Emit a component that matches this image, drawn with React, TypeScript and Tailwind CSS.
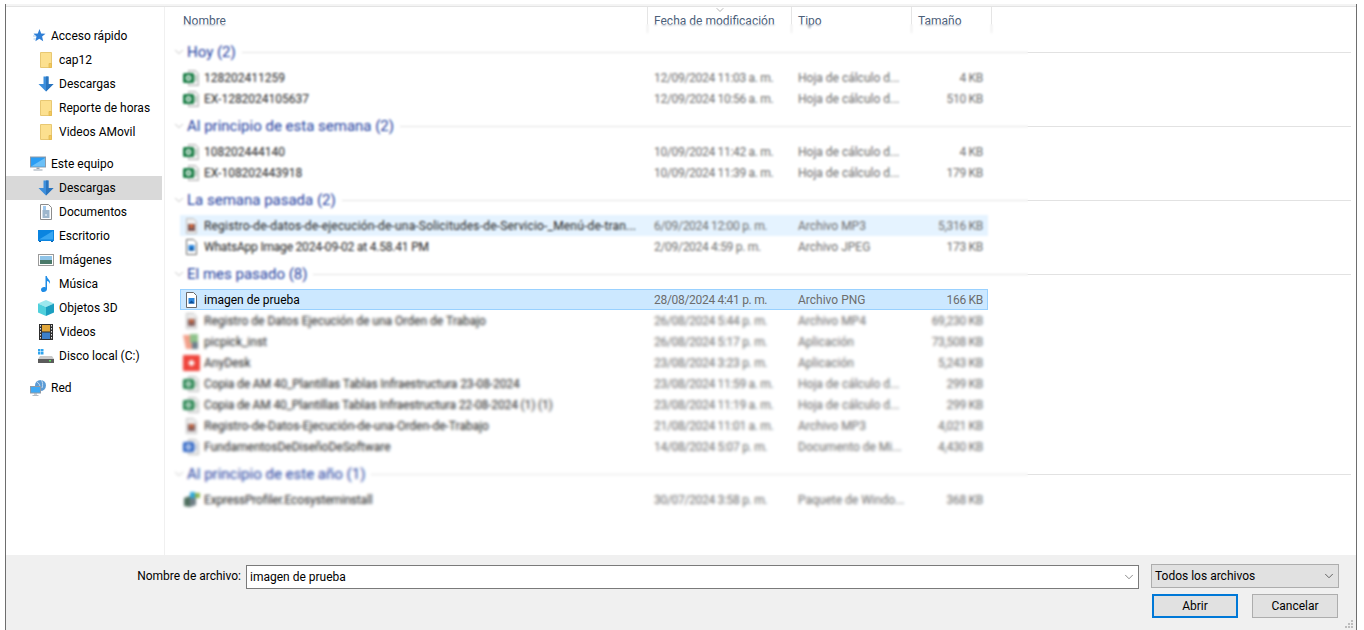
import type { ReactNode } from "react";
import { ChevronDown } from "lucide-react";

const Folder = () => (
  <svg width="16" height="16" viewBox="0 0 16 16">
    <path d="M2.500.5h11v15h-11z" fill="#fce08f" stroke="#e8c873" />
    <path d="M11 11.500h2.500v4H11z" fill="#f3c95f" stroke="#e2b94f" strokeWidth="0.8" />
  </svg>
);

const DownArrow = () => (
  <svg width="16" height="16" viewBox="0 0 16 16">
    <path d="M5.500.5h5v7.500h5L8 15.500.5 8h5z" fill="#3d8fdc" />
    <path d="M8 .5h2.500v7.500h5L8 15.500z" fill="#2a74bd" />
  </svg>
);

const Star = () => (
  <svg width="16" height="16" viewBox="0 0 16 16">
    <path d="M9.500 1l1.700 4.400 4.300.3-3.400 2.900 1.100 4.700-3.900-2.500-3.900 2.500 1.100-4.700L3.500 5.700l4.300-.3z" fill="#2f7fd6" />
    <path d="M3 8h3M3.500 11H6M4 5.500h3" stroke="#a9cdf0" strokeWidth="1" />
  </svg>
);

const Monitor = () => (
  <svg width="16" height="16" viewBox="0 0 16 16">
    <rect x="0.500" y="1" width="15" height="10" fill="#2a9df4" stroke="#8f9aa6" />
    <path d="M1 10.500L15 2v8.500z" fill="#6cc0f7" />
    <path d="M6.500 11.500h3v1.500h-3zM3.500 13.500h9v1h-9z" fill="#9aa5b1" />
  </svg>
);

const Doc = () => (
  <svg width="16" height="16" viewBox="0 0 16 16">
    <path d="M2.500.5h8l3 3v12h-11z" fill="#fff" stroke="#8c8c8c" />
    <path d="M4.500 7h7M4.500 9h7M4.500 11h3M8.500 11h3M4.500 13h7" stroke="#3d6f99" />
    <path d="M5 3h3M5 5h3" stroke="#3d8fdc" />
  </svg>
);

const Desktop = () => (
  <svg width="16" height="16" viewBox="0 0 16 16">
    <rect x="0" y="2" width="16" height="11" fill="#0a84e0" />
    <path d="M1 11.500L15 3v8.500z" fill="#38a6f2" />
    <path d="M1 13.500h2M13 13.500h2" stroke="#0a5fa8" />
  </svg>
);

const Pictures = () => (
  <svg width="16" height="16" viewBox="0 0 16 16">
    <rect x="0.500" y="2.500" width="15" height="11" fill="#fff" stroke="#9a9a9a" />
    <rect x="2" y="4" width="12" height="4" fill="#8fc4e8" />
    <rect x="2" y="8" width="12" height="4" fill="#4a7a6a" />
  </svg>
);

const Music = () => (
  <svg width="16" height="16" viewBox="0 0 16 16">
    <path d="M7.500 0h1.300c.3 3 4 3.500 3.200 8-.5-2-2-3-3-3v8c0 1.700-1.700 3-3.500 3S3 14.800 3 13.400 4.600 11 6 11c.6 0 1.100.1 1.500.4z" fill="#1e8ce6" />
  </svg>
);

const Cube = () => (
  <svg width="16" height="16" viewBox="0 0 16 16">
    <path d="M8 0l8 3.500-8 3.500L0 3.500z" fill="#9be8ee" />
    <path d="M0 3.500L8 7v9L0 12.500z" fill="#4fd0dc" />
    <path d="M16 3.500L8 7v9l8-3.500z" fill="#1b9fc0" />
  </svg>
);

const Film = () => (
  <svg width="16" height="16" viewBox="0 0 16 16">
    <rect x="1" y="0" width="14" height="16" fill="#2d2d2d" />
    <path d="M2.500 1v14M13.500 1v14" stroke="#e5e5e5" strokeDasharray="1.500 1.500" />
    <rect x="4" y="1" width="8" height="6.500" fill="#e0a63a" />
    <rect x="4" y="8.500" width="8" height="6.500" fill="#3d80c9" />
  </svg>
);

const Disk = () => (
  <svg width="16" height="16" viewBox="0 0 16 16">
    <path d="M0 1h2.500v2.500H0zM3 1h2.500v2.500H3zM0 4h2.500v2.500H0zM3 4h2.500v2.500H3z" fill="#2fa4ee" />
    <path d="M2 8h12l2 3H0z" fill="#c9c9c9" />
    <rect x="0" y="11" width="16" height="4" fill="#5b5b5b" />
    <rect x="11" y="12" width="2" height="1.500" fill="#5fe05f" />
  </svg>
);

const Network = () => (
  <svg width="16" height="16" viewBox="0 0 16 16">
    <circle cx="10.500" cy="5.500" r="5.500" fill="#5b9bd5" />
    <path d="M7 2c2 1 3 3 3 6M11 0c2 2 2 5 1 8" stroke="#c4dcf2" fill="none" />
    <rect x="0.500" y="6.500" width="10" height="6.500" fill="#3fa9f5" stroke="#8f9aa6" />
    <path d="M4 13.500h3v1H4zM2.500 15h6v.7h-6z" fill="#9aa5b1" />
  </svg>
);

const ExcelIcon = () => (
  <svg width="17" height="16" viewBox="0 0 17 16">
    <path d="M5.500.5h7l3 3v12h-10z" fill="#eeeeee" stroke="#b5b5b5" />
    <path d="M10 6h4M10 8h4M10 10h4" stroke="#7fae90" />
    <rect x="0" y="3" width="11" height="10" rx="1.500" fill="#1e8049" />
    <circle cx="5.500" cy="8" r="2" fill="none" stroke="#fff" strokeWidth="1.300" />
  </svg>
);

const MediaIcon = () => (
  <svg width="17" height="16" viewBox="0 0 17 16">
    <path d="M3.500.5h7l3 3v12h-10z" fill="#eeeeee" stroke="#bdbdbd" />
    <rect x="5" y="6" width="7" height="7" fill="#7c5a5a" />
    <circle cx="8.500" cy="8" r="2" fill="#d86a3a" />
  </svg>
);

const ImageIcon = () => (
  <svg width="17" height="16" viewBox="0 0 17 16">
    <path d="M3.500.5h7l3 3v12h-10z" fill="#fff" stroke="#6b6b6b" />
    <path d="M5.500 6h6v5.500h-6z" fill="#2d86dc" />
    <path d="M5.500 11.500l3-3 3 3z" fill="#0f4f96" />
  </svg>
);

const PickIcon = () => (
  <svg width="17" height="16" viewBox="0 0 17 16">
    <path d="M0 1h7l3 14H3z" fill="#f3a08a" />
    <path d="M7 0h8v9H7z" fill="#8fc28b" />
    <path d="M9 8h6v7H9z" fill="#6d7f8c" />
  </svg>
);

const AnyDeskIcon = () => (
  <svg width="17" height="16" viewBox="0 0 17 16">
    <rect x="0" y="0" width="17" height="16" rx="1" fill="#ef443b" />
    <path d="M8.500 4.500L12 8l-3.500 3.500L5 8z" fill="#fff" />
  </svg>
);

const WordIcon = () => (
  <svg width="17" height="16" viewBox="0 0 17 16">
    <path d="M5.500.5h7l3 3v12h-10z" fill="#eeeeee" stroke="#b5b5b5" />
    <path d="M10 6h4M10 8h4M10 10h4" stroke="#8fa9d8" />
    <rect x="0" y="3" width="11" height="10" rx="1.500" fill="#2b62c4" />
    <circle cx="5.500" cy="8" r="2" fill="none" stroke="#fff" strokeWidth="1.300" />
  </svg>
);

const PackageIcon = () => (
  <svg width="17" height="16" viewBox="0 0 17 16">
    <path d="M1 6l6-2v11l-6-1z" fill="#4f6f5f" />
    <path d="M7 4l6-2v11l-6 2z" fill="#6f7f86" />
    <path d="M7 0h5v6H7z" fill="#2fa8d8" />
    <path d="M12 1h5v5h-5z" fill="#8db24f" />
  </svg>
);

const quickAccess: [ReactNode, string][] = [
  [<Folder />, "cap12"],
  [<DownArrow />, "Descargas"],
  [<Folder />, "Reporte de horas"],
  [<Folder />, "Videos AMovil"],
];

const thisPc: [ReactNode, string, boolean?][] = [
  [<DownArrow />, "Descargas", true],
  [<Doc />, "Documentos"],
  [<Desktop />, "Escritorio"],
  [<Pictures />, "Imágenes"],
  [<Music />, "Música"],
  [<Cube />, "Objetos 3D"],
  [<Film />, "Videos"],
  [<Disk />, "Disco local (C:)"],
];

type FileRow = {
  icon: ReactNode;
  name: string;
  date: string;
  kind: string;
  size: string;
  state?: "hover" | "selected";
  nameClass?: string;
};

const hoja = "Hoja de cálculo d...";

const groups: { title: string; files: FileRow[] }[] = [
  {
    title: "Hoy (2)",
    files: [
      { icon: <ExcelIcon />, name: "128202411259", date: "12/09/2024 11:03 a. m.", kind: hoja, size: "4 KB" },
      { icon: <ExcelIcon />, name: "EX-1282024105637", date: "12/09/2024 10:56 a. m.", kind: hoja, size: "510 KB" },
    ],
  },
  {
    title: "Al principio de esta semana (2)",
    files: [
      { icon: <ExcelIcon />, name: "108202444140", date: "10/09/2024 11:42 a. m.", kind: hoja, size: "4 KB" },
      { icon: <ExcelIcon />, name: "EX-108202443918", date: "10/09/2024 11:39 a. m.", kind: hoja, size: "179 KB" },
    ],
  },
  {
    title: "La semana pasada (2)",
    files: [
      {
        icon: <MediaIcon />,
        name: "Registro-de-datos-de-ejecución-de-una-Solicitudes-de-Servicio-_Menú-de-tran...",
        date: "6/09/2024 12:00 p. m.",
        kind: "Archivo MP3",
        size: "5,316 KB",
        state: "hover",
        nameClass: "tracking-[0.18px]",
      },
      {
        icon: <ImageIcon />,
        name: "WhatsApp Image 2024-09-02 at 4.58.41 PM",
        date: "2/09/2024 4:59 p. m.",
        kind: "Archivo JPEG",
        size: "173 KB",
        nameClass: "tracking-[-0.2px]",
      },
    ],
  },
  {
    title: "El mes pasado (8)",
    files: [
      { icon: <ImageIcon />, name: "imagen de prueba", date: "28/08/2024 4:41 p. m.", kind: "Archivo PNG", size: "166 KB", state: "selected" },
      { icon: <MediaIcon />, name: "Registro de Datos Ejecución de una Orden de  Trabajo", date: "26/08/2024 5:44 p. m.", kind: "Archivo MP4", size: "69,230 KB" },
      { icon: <PickIcon />, name: "picpick_inst", date: "26/08/2024 5:17 p. m.", kind: "Aplicación", size: "73,508 KB" },
      { icon: <AnyDeskIcon />, name: "AnyDesk", date: "23/08/2024 3:23 p. m.", kind: "Aplicación", size: "5,243 KB" },
      {
        icon: <ExcelIcon />,
        name: "Copia de AM 40_Plantillas Tablas Infraestructura 23-08-2024",
        date: "23/08/2024 11:59 a. m.",
        kind: hoja,
        size: "299 KB",
        nameClass: "tracking-[-0.12px]",
      },
      {
        icon: <ExcelIcon />,
        name: "Copia de AM 40_Plantillas Tablas Infraestructura 22-08-2024 (1) (1)",
        date: "23/08/2024 11:19 a. m.",
        kind: hoja,
        size: "299 KB",
        nameClass: "tracking-[-0.15px]",
      },
      { icon: <MediaIcon />, name: "Registro-de-Datos-Ejecución-de-una-Orden-de-Trabajo", date: "21/08/2024 11:01 a. m.", kind: "Archivo MP3", size: "4,021 KB" },
      { icon: <WordIcon />, name: "FundamentosDeDiseñoDeSoftware", date: "14/08/2024 5:07 p. m.", kind: "Documento de Mi...", size: "4,430 KB" },
    ],
  },
  {
    title: "Al principio de este año (1)",
    files: [
      {
        icon: <PackageIcon />,
        name: "ExpressProfiler.Ecosysteminstall",
        date: "30/07/2024 3:58 p. m.",
        kind: "Paquete de Windo...",
        size: "368 KB",
        nameClass: "tracking-[-0.18px]",
      },
    ],
  },
];

const NavRow = ({ icon, label, active }: { icon: ReactNode; label: string; active?: boolean }) => (
  <div className={`flex h-6 items-center pl-[32px] ${active ? "bg-[#d9d9d9]" : ""}`}>
    {icon}
    <span className="ml-[5px] text-[12px] text-black">{label}</span>
  </div>
);

const HeaderCell = ({ label, className }: { label: string; className: string }) => (
  <div className={`h-full border-r border-[#e5e5e5] text-[12px] leading-[28px] text-[#4c607a] ${className}`}>{label}</div>
);

const FileLine = ({ file }: { file: FileRow }) => {
  const bg =
    file.state === "selected"
      ? "border border-[#99d1ff] bg-[#cce8ff]"
      : file.state === "hover"
        ? "border border-[#e5f3ff] bg-[#e5f3ff]"
        : "border border-transparent";
  return (
    <div className={`grid h-[21px] grid-cols-[467px_144px_120px_75px] items-center text-[12px] ${bg}`}>
      <div className={`flex items-center overflow-hidden whitespace-nowrap pl-[2px] ${file.state === "selected" ? "text-black" : "text-[#222222]"}`}>
        {file.icon}
        <span className={`ml-[4px] ${file.nameClass ?? ""}`}>{file.name}</span>
      </div>
      <div className="pl-[6px] tracking-[-0.3px] text-[#6d6d6d]">{file.date}</div>
      <div className="pl-[6px] text-[#6d6d6d]">{file.kind}</div>
      <div className="pr-[4px] text-right tracking-[-0.3px] text-[#6d6d6d]">{file.size}</div>
    </div>
  );
};

const Group = ({ title, files }: { title: string; files: FileRow[] }) => (
  <section className="pt-[6px]">
    <div className="mb-[4px] flex h-[22px] items-center">
      <ChevronDown className="ml-[7px] h-[14px] w-[14px] text-[#a8a8a8]" strokeWidth={1.25} />
      <span className="ml-[1px] whitespace-nowrap text-[15px] text-[#1f3f9f]">{title}</span>
      <div className="ml-[6px] h-px flex-1 bg-[#e2e2e2]" />
    </div>
    <div className="ml-[15px] w-[808px]">
      {files.map((f) => (
        <FileLine key={f.name} file={f} />
      ))}
    </div>
  </section>
);

export default function App() {
  return (
    <div className="relative h-[630px] w-[1364px] overflow-hidden bg-white pt-[4px] pl-[5px] pr-[7px] font-['Roboto','Noto_Sans',sans-serif]">
      <div className="flex h-[626px] flex-col border-x border-[#6e6e6e]">
        <div className="h-[3px] border-b border-[#e3e3e3] bg-[#f4f4f4]" />
        <div className="flex min-h-0 flex-1">
          <nav className="w-[158px] shrink-0 pr-[2px] pt-[17px]">
            <div className="flex h-6 items-center pl-[24px]">
              <Star />
              <span className="ml-[5px] text-[12px] text-black">Acceso rápido</span>
            </div>
            {quickAccess.map(([icon, label]) => (
              <NavRow key={label} icon={icon} label={label} />
            ))}
            <div className="mt-[8px] flex h-6 items-center pl-[24px]">
              <Monitor />
              <span className="ml-[5px] text-[12px] text-black">Este equipo</span>
            </div>
            {thisPc.map(([icon, label, active]) => (
              <NavRow key={label} icon={icon} label={label} active={active} />
            ))}
            <div className="mt-[8px] flex h-6 items-center pl-[24px]">
              <Network />
              <span className="ml-[5px] text-[12px] text-black">Red</span>
            </div>
          </nav>
          <main className="min-w-0 flex-1 border-l border-[#f0f0f0]">
            <div className="relative flex h-[26px]">
              <HeaderCell label="Nombre" className="w-[483px] pl-[18px]" />
              <HeaderCell label="Fecha de modificación" className="w-[144px] pl-[6px]" />
              <HeaderCell label="Tipo" className="w-[120px] pl-[6px]" />
              <HeaderCell label="Tamaño" className="w-[80px] pl-[6px]" />
              <ChevronDown className="absolute left-[549px] top-[-3px] h-[12px] w-[12px] text-[#8a8a8a]" strokeWidth={1.25} />
            </div>
            <div className="pr-[5px] pt-[2px]">
              {groups.map((g) => (
                <Group key={g.title} title={g.title} files={g.files} />
              ))}
            </div>
          </main>
        </div>
        <footer className="h-[75px] shrink-0 bg-[#f0f0f0] pt-[10px]">
          <div className="flex items-start pl-[129px]">
            <label className="w-[106px] pt-[2px] text-right text-[12px] text-black whitespace-nowrap">Nombre de archivo:</label>
            <div className="ml-[5px] flex h-[24px] w-[893px] items-center justify-between border border-[#7a7a7a] bg-white pl-[3px] pr-[2px] text-[12px] text-black">
              imagen de prueba
              <ChevronDown className="h-[14px] w-[14px] text-[#606060]" strokeWidth={1.25} />
            </div>
            <div className="ml-[12px] mt-[-1px] flex h-[24px] w-[188px] items-center justify-between border border-[#adadad] bg-[#e1e1e1] pl-[3px] pr-[2px] text-[12px] text-black">
              Todos los archivos
              <ChevronDown className="h-[14px] w-[14px] text-[#505050]" strokeWidth={1.5} />
            </div>
          </div>
          <div className="mt-[5px] flex justify-end gap-[14px] pr-[18px]">
            <button className="h-[24px] w-[86px] border-2 border-[#0078d7] bg-[#e1e1e1] text-[12px] text-black">Abrir</button>
            <button className="h-[24px] w-[86px] border border-[#adadad] bg-[#e1e1e1] text-[12px] text-black">Cancelar</button>
          </div>
        </footer>
      </div>
      {/* blur patches over the file list, the selected row stays sharp */}
      <div className="absolute left-[165px] top-[24px] h-[265px] w-[863px] backdrop-blur-[1.3px]" />
      <div className="absolute left-[165px] top-[311px] h-[219px] w-[863px] backdrop-blur-[1.700px]" />
      <div className="absolute left-[1345px] top-[620px] grid grid-cols-3 gap-px">
        {[0, 0, 1, 0, 1, 1, 1, 1, 1].map((on, i) => (
          <span key={i} className={`h-[2px] w-[2px] ${on ? "bg-[#bdbdbd]" : ""}`} />
        ))}
      </div>
    </div>
  );
}
